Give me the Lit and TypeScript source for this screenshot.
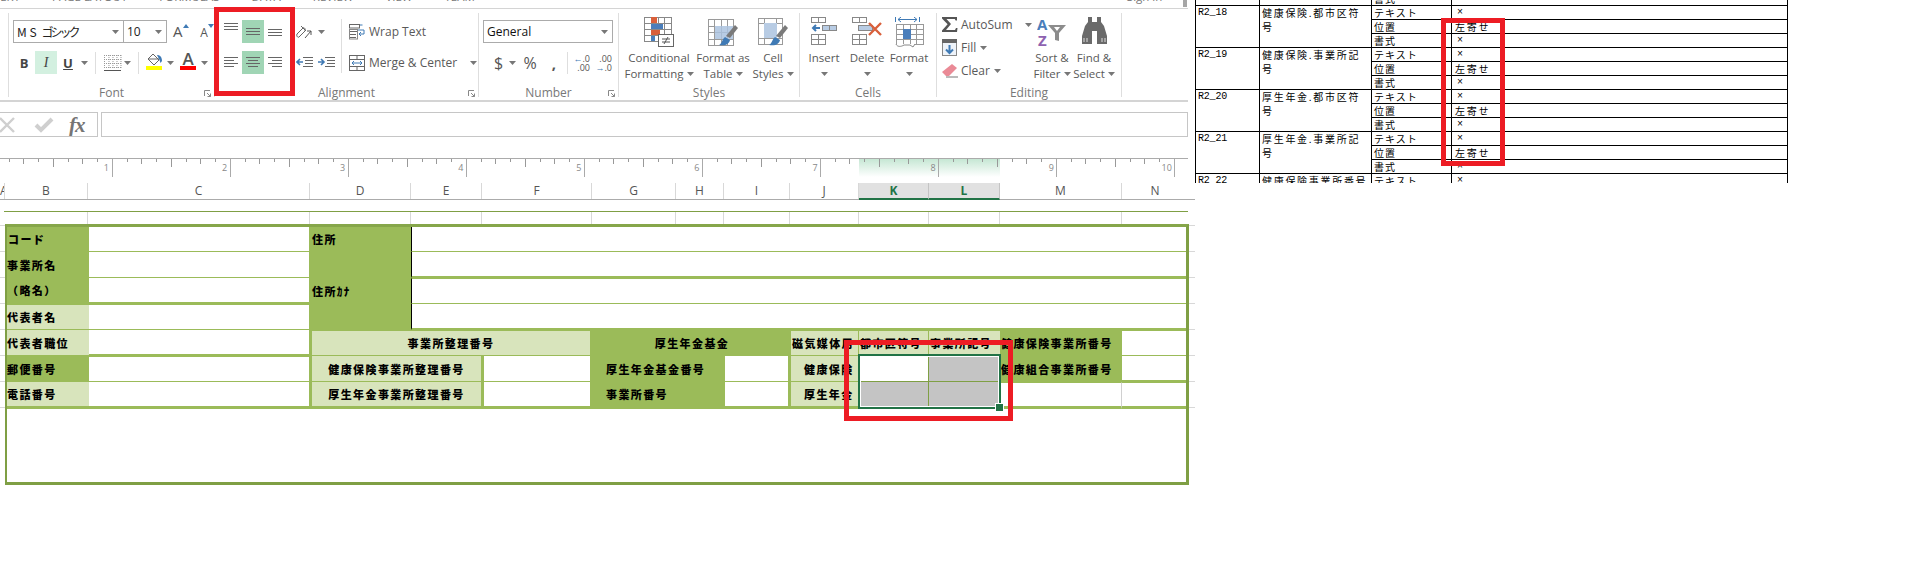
import { LitElement, html, svg, css } from "lit";
import { customElement } from "lit/decorators.js";

const caret = html`<svg class="caret" width="7" height="4" viewBox="0 0 7 4"><path d="M0 0h7L3.5 4z" fill="#777"/></svg>`;
const launcher = html`<svg class="launch" width="7" height="7" viewBox="0 0 7 7"><path d="M.5 6V.5H6M3 3l3.5 3.5M6.5 3.5v3h-3" fill="none" stroke="#888"/></svg>`;

const lines = (rows: number[][]) => html`<svg width="16" height="14" viewBox="0 0 16 14">${rows.map(
  ([x, y, w]) => svg`<rect x=${x} y=${y} width=${w} height="1" fill="#666"/>`)}</svg>`;

const indent = (right: boolean) => html`<svg width="17" height="11" viewBox="0 0 17 11">
  <path d="M7 .5h10M9 3.500h8M9 6.500h8M7 9.500h10" stroke="#666" fill="none"/>
  ${right ? svg`<path d="M0 5h5M3 2l3 3-3 3" stroke="#3f7ab5" stroke-width="1.6" fill="none"/>`
          : svg`<path d="M7 5H2M4 2L1 5l3 3" stroke="#3f7ab5" stroke-width="1.6" fill="none"/>`}
</svg>`;

const gridLines = (x: number, y: number, w: number, h: number, cols: number, rows: number, c = "#888") => {
  const out = [svg`<rect x=${x + .5} y=${y + .5} width=${w} height=${h} fill="#fff" stroke=${c}/>`];
  for (let i = 1; i < cols; i++) out.push(svg`<path d="M${Math.round(x + (w * i) / cols) + .5} ${y}v${h}" stroke=${c}/>`);
  for (let i = 1; i < rows; i++) out.push(svg`<path d="M${x} ${Math.round(y + (h * i) / rows) + .5}h${w}" stroke=${c}/>`);
  return out;
};

const iconCF = html`<svg width="31" height="30" viewBox="0 0 31 30">
  ${gridLines(0, 0, 27, 24, 4, 4)}
  <rect x="7" y="0" width="6" height="6" fill="#d9603b"/><rect x="7" y="7" width="12" height="5" fill="#4a7ebb"/>
  <rect x="7" y="13" width="9" height="5" fill="#d9603b"/><rect x="7" y="19" width="4" height="5" fill="#4a7ebb"/>
  <rect x="14.5" y="17.5" width="15" height="12" fill="#fff" stroke="#666"/>
  <path d="M18 22h8M18 25h8M24 20l-4 7" stroke="#555" fill="none"/>
</svg>`;
const brush = svg`<path d="M27 8l3 3-8 10-4-2z" fill="#7a7a7a"/><path d="M17 20l5 3c-1 4-4 6-11 5 3-1 3-6 6-8z" fill="#3f7ab5"/>`;
const iconTable = html`<svg width="31" height="30" viewBox="0 0 31 30">
  ${gridLines(0, 2, 25, 26, 4, 4, "#9a9a9a")}
  <rect x="7" y="9" width="18" height="13" fill="#b8cce4"/>
  <path d="M13.500 9v13M19.500 9v13M7 15.500h18" stroke="#a8bcd4"/>${brush}
</svg>`;
const iconCell = html`<svg width="31" height="30" viewBox="0 0 31 30">
  ${gridLines(0, 1, 24, 26, 1, 1, "#9a9a9a")}
  <path d="M0 6.500h24M6.500 1v26M0 21.500h24M18.500 1v26" stroke="#9a9a9a"/>
  <rect x="6" y="6" width="13" height="15" fill="#b8cce4"/>${brush}
</svg>`;
const iconInsert = html`<svg width="27" height="29" viewBox="0 0 27 29">
  ${gridLines(0, 0, 14, 5, 2, 1)}
  <path d="M9 11H3M5 8l-3 3 3 3" stroke="#3f7ab5" stroke-width="2" fill="none"/>
  <rect x="11.500" y="8.500" width="14" height="5" fill="#b8cce4" stroke="#888"/><path d="M18.500 8v6" stroke="#888"/>
  ${gridLines(0, 17, 14, 10, 2, 2)}
</svg>`;
const iconDelete = html`<svg width="31" height="29" viewBox="0 0 31 29">
  ${gridLines(0, 0, 14, 5, 2, 1)}
  <rect x="6.500" y="8.500" width="14" height="5" fill="#b8cce4" stroke="#888"/>
  ${gridLines(0, 17, 14, 10, 2, 2)}
  <path d="M17 6l12 12M29 6L17 18" stroke="#d9603b" stroke-width="2.400" fill="none"/>
</svg>`;
const iconFormat = html`<svg width="29" height="31" viewBox="0 0 29 31">
  <path d="M.5 0v5M24.500 0v5M3 2.500h19M6 0L3 2.500 6 5M19 0l3 2.500L19 5" stroke="#3f7ab5" fill="none"/>
  ${gridLines(1, 7, 27, 20, 4, 4, "#999")}
  <rect x="8" y="12" width="8" height="10" fill="#4a7ebb"/>
  <path d="M1 27c1 3 5 3 8 1h6l3 2 2-3" stroke="#888" fill="#fff"/>
</svg>`;

const sigma = html`<svg width="17" height="15" viewBox="0 0 17 15"><path d="M0 0h15v3.500h-1.400l-.8-1.600H4.500L9 7l-5 6h9l1-2h1.500L15 15H0v-1.400L5.600 7.200 0 1.400z" fill="#555"/></svg>`;
const fill = html`<svg width="15" height="17" viewBox="0 0 15 17"><rect x=".5" y=".5" width="14" height="16" fill="#eef3f9" stroke="#888"/><rect x="0" y="0" width="15" height="4" fill="#666"/><path d="M7.500 6v8M4 10.500l3.500 3.500 3.500-3.500" stroke="#3f7ab5" stroke-width="2" fill="none"/></svg>`;
const eraser = html`<svg width="16" height="14" viewBox="0 0 16 14"><path d="M10 0l5 4-8 8H4L0 8z" fill="#ea8a96"/><path d="M4 13h12" stroke="#777"/></svg>`;
const sortIcon = html`<svg width="31" height="29" viewBox="0 0 31 29">
  <text x="0" y="13" class="sa">A</text><text x="1" y="29" class="sz">Z</text>
  <path d="M11 8h18l-7 8v8l-4-1v-7z" fill="#8c8c8c"/><path d="M17 10h6l-3 4z" fill="#fff"/>
</svg>`;
const binoc = html`<svg width="27" height="28" viewBox="0 0 27 28">
  <path d="M7 0h4v5h5V0h4v5l3 4 3 10v8h-10V14h-5v13H1v-8L4 9l3-4z" fill="#6a6a6a"/>
  <path d="M3 21v4M6 21v4M21 21v4M24 21v4" stroke="#ddd"/>
</svg>`;

const wrapIcon = html`<svg width="16" height="16" viewBox="0 0 16 16">
  <rect x=".5" y=".5" width="10" height="3.500" fill="#fff" stroke="#666"/><path d="M1 7.500h7M1 10.500h6M1 13.500h6" stroke="#666"/>
  <rect x=".5" y="5.500" width="8" height="9.500" fill="none" stroke="#888"/>
  <path d="M11 1h2.500M9 6h6v4h-5M12 8l-2 2 2 2" stroke="#3f7ab5" fill="none"/>
</svg>`;
const mergeIcon = html`<svg width="16" height="16" viewBox="0 0 16 16">
  <rect x=".5" y=".5" width="15" height="15" fill="#fff" stroke="#666"/><path d="M0 4.500h16M0 11.500h16M8 0v4M8 12v4" stroke="#666"/>
  <path d="M3 8h10M5 6L3 8l2 2M11 6l2 2-2 2" stroke="#3f7ab5" fill="none"/>
</svg>`;
const orient = html`<svg width="17" height="14" viewBox="0 0 17 14">
  <path d="M1 9l6-6M3 12l6-6M1 9c-1 2 1 4 2 3M7 3c1-1 3 1 2 3M5 1l5 5" stroke="#666" fill="none"/>
  <path d="M9 13L15 6M15 6v4M15 6h-4" stroke="#555" fill="none"/>
</svg>`;
const borderIcon = html`<svg width="19" height="16" viewBox="0 0 19 16"><path d="M1 .5h17M1 4.500h17M1 8.500h17M1 12.500h17M1.500 0v13M6 0v13M10 0v13M14 0v13M18 0v13" stroke="#999" stroke-dasharray="1 1" fill="none"/><path d="M1 15.500h17" stroke="#555"/></svg>`;
const bucket = html`<svg width="17" height="13" viewBox="0 0 17 13"><path d="M7 1l6 6-5 5-6-6z" fill="#fff" stroke="#666"/><path d="M2 6h11" stroke="#666"/><path d="M11 2c3 0 5 2 5 6l-1.500 2-1-3z" fill="#3f7ab5"/></svg>`;
const xIcon = html`<svg width="16" height="16" viewBox="0 0 16 16"><path d="M1 1l14 14M15 1L1 15" stroke="#cfcfcf" stroke-width="2.400"/></svg>`;
const checkIcon = html`<svg width="20" height="16" viewBox="0 0 20 16"><path d="M2 8l5 5L18 2" stroke="#cfcfcf" stroke-width="4" fill="none"/></svg>`;

const rulerTicks = () => {
  const out = [];
  const step = 118 / 8;
  for (let i = 0; i * step + 8.5 < 1188; i++) {
    const x = Math.round(8.5 + i * step) + 0.5;
    const k = (i + 1) % 8;
    const h = k === 0 ? 18 : k === 4 ? 8 : k % 2 === 0 ? 5 : 3;
    out.push(svg`<path d="M${x} 0v${h}" stroke=${k === 0 ? "#aaa" : "#999"}/>`);
  }
  for (let n = 1; n <= 10; n++) {
    out.push(svg`<text x=${111 + (n - 1) * 118.1 - 2} y="12" text-anchor="end" class="rn">${n}</text>`);
  }
  return out;
};

const headers: [string, string, string?][] = [
  ["A", "w5"], ["B", "w83"], ["C", "w222"], ["D", "w101"], ["E", "w71"], ["F", "w110"], ["G", "w84"],
  ["H", "w48"], ["I", "w66"], ["J", "w69"], ["K", "w70", "sel"], ["L", "w71", "sel"], ["M", "w122"], ["N", "w66"],
];

const docRows: [string, string, string][] = [
  ["R2_18", "健康保険.都市区符", "号"],
  ["R2_19", "健康保険.事業所記", "号"],
  ["R2_20", "厚生年金.都市区符", "号"],
  ["R2_21", "厚生年金.事業所記", "号"],
];

@customElement("app-root")
export class AppRoot extends LitElement {
  static styles = css`
    :host { display: block; position: relative; width: 1914px; height: 568px; overflow: hidden; background: #fff; font-family: "Open Sans", "Noto Sans", sans-serif; color: #555; }
    .page { display: flex; align-items: flex-start; }
    .excel { width: 1195px; flex: none; }
    .chrome { width: 1188px; }
    svg { display: block; flex: none; }

    .tabs { height: 8px; overflow: hidden; }
    .tabs-in { display: flex; gap: 32px; margin-top: -12px; margin-left: -18px; font-size: 11.5px; line-height: 17px; color: #777; white-space: nowrap; }
    .signin { margin-left: 620px; }
    .scroll { position: absolute; left: 1183px; top: 0; width: 4px; height: 7px; background: #a6a6a6; }

    .ribbon { height: 91px; border-top: 1px solid #d4d4d4; border-bottom: 2px solid #d4d4d4; display: flex; padding-left: 8px; font-size: 11.5px; color: #595959; box-sizing: content-box; }
    .group { position: relative; margin-top: 4px; height: 84px; border-left: 1px solid #dedede; box-sizing: border-box; display: flex; flex: none; }
    .g-font { width: 206px; }
    .g-align { width: 264px; padding-left: 8px; }
    .g-num { width: 140px; }
    .g-styles { width: 181px; padding-left: 8px; border-left: 1px solid #dedede; }
    .g-cells { width: 137px; padding-left: 2px; }
    .g-edit { width: 186px; border-right: 1px solid #dedede; }
    .glabel { position: absolute; left: 0; right: 0; bottom: -3px; height: 14px; line-height: 14px; text-align: center; font-size: 12px; color: #777; }
    .launch { position: absolute; right: 3px; bottom: 0; }

    .rows { display: grid; grid-template-rows: 23px 23px; row-gap: 8px; padding-top: 7px; }
    .row { display: flex; align-items: center; }
    .p4 { padding-left: 4px; }
    .pn { padding-left: 9px; }
    .combo { height: 23px; box-sizing: border-box; border: 1px solid #ababab; display: flex; align-items: center; justify-content: space-between; padding: 0 4px 0 3px; background: #fff; }
    .cfont { width: 111px; font-family: "Noto Sans CJK JP", sans-serif; font-size: 12px; color: #222; }
    .cfont span { letter-spacing: -3px; margin-left: 5px; }
    .csize { width: 44px; margin-left: -1px; font-size: 12px; color: #222; }
    .cnum { width: 130px; font-size: 12px; color: #111; }
    .grow { margin-left: 6px; width: 22px; display: flex; align-items: flex-start; color: #555; line-height: 1; }
    .grow b { font-weight: 400; font-size: 15px; }
    .shrink { margin-left: 1px; width: 22px; display: flex; align-items: flex-start; justify-content: center; color: #555; line-height: 1; }
    .shrink b { font-weight: 400; font-size: 12px; margin-top: 3px; }
    .tb { width: 22px; height: 23px; display: flex; align-items: center; justify-content: center; font-size: 13px; color: #444; }
    .tb.bold { font-weight: 700; }
    .tb.it { font-style: italic; background: #d3f0e0; font-family: "Liberation Serif", serif; font-size: 14px; }
    .tb.ul { text-decoration: underline; font-weight: 700; }
    .c11 { width: 11px; display: flex; justify-content: center; }
    .c10 { width: 10px; display: flex; justify-content: center; }
    .c16 { width: 16px; display: flex; justify-content: center; }
    .sep { width: 1px; height: 22px; background: #dedede; flex: none; }
    .m57 { margin: 0 7px 0 5px; }
    .m67 { margin: 0 7px 0 6px; }
    .m06 { margin-right: 6px; }
    .colored { width: 16px; height: 23px; display: flex; flex-direction: column; align-items: center; }
    .colored .ico { height: 15px; display: flex; align-items: flex-end; font-size: 17px; font-weight: 600; line-height: 15px; color: #555; }
    .bar { width: 16px; height: 4px; }
    .yel { background: #ffff00; }
    .red { background: #ff0000; }
    .ml2 { margin-left: 2px; }

    .al-grid { display: grid; grid-template-columns: 16px 22px 16px; column-gap: 3px; grid-template-rows: 23px 23px; row-gap: 8px; padding-top: 7px; }
    .al { display: flex; justify-content: center; height: 23px; padding-top: 3px; box-sizing: border-box; }
    .al.on { background: #a0d5b5; }
    .orient { margin-left: 13px; width: 45px; }
    .orient .row { gap: 5px; }
    .v { margin-right: 7px; height: 54px; margin-top: 6px; }
    .wrap { width: 127px; }
    .wrap .row { gap: 4px; color: #595959; font-size: 12px; white-space: nowrap; }
    .merge-caret { margin-left: 9px; }

    .sym { font-size: 16px; color: #555; width: 21px; text-align: center; }
    .pct { font-size: 16px; width: 22px; margin-left: 3px; text-align: center; color: #555; }
    .cm { font-size: 15px; font-weight: 700; width: 26px; text-align: center; color: #555; }
    .dec { font-size: 9px; line-height: 9px; color: #555; width: 16px; margin-right: 6px; display: flex; flex-direction: column; align-items: flex-end; white-space: nowrap; }
    .dec i { font-style: normal; color: #3f7ab5; }

    .bigs { display: grid; }
    .b3s { grid-template-columns: 64px 64px 36px; }
    .b3c { grid-template-columns: 44px 42px 42px; }
    .b2e { grid-template-columns: 42px 42px; }
    .big { display: flex; flex-direction: column; align-items: center; white-space: nowrap; line-height: 16px; }
    .big .ic { height: 37px; box-sizing: border-box; padding-top: 4px; }
    .big .tl { height: 16px; display: flex; align-items: center; gap: 3px; }
    .sa { font: 700 15px "Open Sans", sans-serif; fill: #4a7ebb; }
    .sz { font: 700 15px "Open Sans", sans-serif; fill: #8e62b0; }
    .editcol { width: 94px; display: grid; grid-template-rows: 23px 23px 23px; }
    .ed { display: flex; align-items: center; padding-left: 5px; font-size: 12px; }
    .ed .i { width: 19px; display: flex; }
    .ed .sumc { margin-left: 12px; }
    .ed .cr { margin-left: 4px; }

    .fbar { height: 25px; margin-top: 10px; display: flex; gap: 3px; }
    .names { width: 98px; box-sizing: border-box; border: 1px solid #c6c6c6; border-left: 0; display: flex; align-items: center; overflow: hidden; }
    .names .x { margin-left: -1px; width: 35px; }
    .names .ck { width: 35px; }
    .fx { font-family: "Liberation Serif", serif; font-style: italic; font-weight: 700; font-size: 21px; color: #757575; line-height: 24px; letter-spacing: -1px; }
    .input { flex: 1; border: 1px solid #c6c6c6; box-sizing: border-box; }

    .ruler { position: relative; height: 24px; margin-top: 21px; border-top: 1px solid #ababab; }
    .ruler-sel { position: absolute; left: 859px; top: 0; width: 141px; height: 18px; background: linear-gradient(#c6e7d4, #fff); }
    .ruler svg { position: relative; }
    .rn { font: 9px "Open Sans", sans-serif; fill: #888; }

    .cols { display: flex; height: 16px; width: 1195px; border-bottom: 1px solid #ababab; font-size: 12px; color: #555; }
    .ch { box-sizing: border-box; border-right: 1px solid #d8d8d8; text-align: center; line-height: 16px; flex: none; overflow: hidden; }
    .ch.sel { background: #e1e1e1; color: #217346; font-weight: 700; border-bottom: 2px solid #217346; border-right-color: #c4c4c4; height: 17px; }
    .ch:last-child { border-right: 0; }
    .w5 { width: 5px; } .w83 { width: 83px; } .w222 { width: 222px; } .w101 { width: 101px; } .w71 { width: 71px; }
    .w110 { width: 110px; } .w84 { width: 84px; } .w48 { width: 48px; } .w66 { width: 66px; } .w69 { width: 69px; }
    .w70 { width: 70px; } .w122 { width: 122px; }

    .sheet { margin-top: 11px; width: 1195px; background: repeating-linear-gradient(#d8d8d8 0 1px, transparent 1px 26px) 0 14px / 100% 183px no-repeat; }
    .topline { margin-left: 4px; width: 1184px; height: 12px; border-top: 1px solid #7f9f44; display: flex; box-sizing: content-box; }
    .topline div { box-sizing: border-box; border-right: 1px solid #d8d8d8; flex: none; }
    .topline div:first-child { width: 84px; }
    .tbl { position: relative; margin-left: 5px; width: 1184px; box-sizing: border-box; border: solid #7f9f44; border-width: 3px 3px 3px 2px; display: grid;
      grid-template-columns: 82px 223px 99px 73px 109px 83px 49px 66px 68px 70px 71px 122px 1fr;
      grid-template-rows: 25px 26px 26px 26px 26px 26px 27px 73px;
      font-family: "Noto Sans CJK JP", sans-serif; font-weight: 900; font-size: 11px; letter-spacing: 1.4px; color: #000; background: #fff; }
    .tbl { border-top-color: #86a64a; }
    .c { box-sizing: border-box; border: 0 solid #9bbb59; border-bottom-width: 1px; display: flex; align-items: center; white-space: nowrap; background: #fff; min-width: 0; }
    .d { background: #9bbb59; }
    .l { background: #d8e4bc; }
    .g { background: #c4c4c4; }
    .bb2 { border-bottom-width: 2px; }
    .bb3 { border-bottom-width: 3px; }
    .bt1 { border-top-width: 1px; }
    .br3 { border-right-width: 3px; }
    .br1 { border-right-width: 1px; }
    .blk { border-left: 1px solid #000; }
    .ol { border-color: #7f9f44; }
    .gr { border-right: 1px solid #d0d0d0; }
    .s2 { grid-column: span 2; } .s3 { grid-column: span 3; } .s10 { grid-column: span 10; } .s13 { grid-column: span 13; }
    .ctr { justify-content: center; }
    .ind { padding-left: 13px; }
    .p1 { padding-left: 1px; }
    .nb { border-bottom: 0; }
    .selection { position: absolute; left: 851px; top: 127px; width: 143px; height: 55px; box-sizing: border-box; border: 2px solid #217346; box-shadow: inset 0 0 0 1px #fff; }
    .handle { position: absolute; right: -5px; bottom: -5px; width: 7px; height: 7px; background: #217346; border: 1px solid #fff; }

    .doc { width: 719px; height: 183px; overflow: hidden; flex: none; }
    table { margin-top: -9px; border-collapse: collapse; width: 593px; table-layout: fixed; font-family: "Noto Sans CJK JP", sans-serif; font-size: 10px; color: #000; }
    td { border: 1px solid #000; height: 14px; padding: 0 0 0 2px; line-height: 13px; box-sizing: border-box; vertical-align: top; overflow: hidden; white-space: nowrap; letter-spacing: 1px; }
    .nm { line-height: 14px; }
    .id { font-family: "Liberation Mono", monospace; letter-spacing: -.2px; }
    .nm { letter-spacing: 1.7px; }
    .mk { padding-left: 5px; font-family: "Liberation Mono", monospace; letter-spacing: 0; }
    .pos { padding-left: 3px; letter-spacing: 1.7px; }
    .c1 { width: 64px; } .c2 { width: 112px; } .c3 { width: 80px; }

    .mark { position: absolute; box-sizing: border-box; border: 5px solid #ed1c24; }
    .m1 { left: 214px; top: 7px; width: 81px; height: 89px; }
    .m2 { left: 844px; top: 340px; width: 169px; height: 81px; }
    .m3 { left: 1441px; top: 18px; width: 64px; height: 148px; }
  `;

  render() {
    const kv = html`<td>テキスト</td><td class="mk">×</td>`;
    return html`
      <div class="page">
        <div class="excel">
          <div class="chrome">
            <div class="tabs"><div class="tabs-in"><span>INSERT</span><span>PAGE LAYOUT</span><span>FORMULAS</span><span>DATA</span><span>REVIEW</span><span>VIEW</span><span>TEAM</span><span class="signin">Sign in</span></div></div>
            <div class="ribbon">
              <div class="group g-font">
                <div class="rows">
                  <div class="row p4">
                    <div class="combo cfont"><div>M S<span>ゴシック</span></div>${caret}</div>
                    <div class="combo csize"><div>10</div>${caret}</div>
                    <div class="grow"><b>A</b><svg width="6" height="4" viewBox="0 0 6 4"><path d="M0 4h6L3 0z" fill="#3f7ab5"/></svg></div>
                    <div class="shrink"><b>A</b><svg width="6" height="4" viewBox="0 0 6 4"><path d="M0 0h6L3 4z" fill="#3f7ab5"/></svg></div>
                  </div>
                  <div class="row p4">
                    <div class="tb bold">B</div><div class="tb it">I</div><div class="tb ul">U</div><div class="c11">${caret}</div>
                    <div class="sep m57"></div>${borderIcon}<div class="c10">${caret}</div>
                    <div class="sep m67"></div>
                    <div class="colored"><div class="ico">${bucket}</div><div class="bar yel"></div></div><div class="c16">${caret}</div>
                    <div class="colored ml2"><div class="ico">A</div><div class="bar red"></div></div><div class="c16">${caret}</div>
                  </div>
                </div>
                <div class="glabel">Font</div>${launcher}
              </div>

              <div class="group g-align">
                <div class="al-grid">
                  <div class="al">${lines([[1, 0, 14], [1, 3, 14], [1, 6, 14]])}</div>
                  <div class="al on">${lines([[1, 5, 14], [1, 8, 14], [1, 11, 14]])}</div>
                  <div class="al">${lines([[1, 9, 14], [1, 12, 14], [1, 6, 14]])}</div>
                  <div class="al">${lines([[1, 3, 14], [1, 6, 10], [1, 9, 14], [1, 12, 10]])}</div>
                  <div class="al on">${lines([[1, 3, 14], [3, 6, 10], [1, 9, 14], [3, 12, 10]])}</div>
                  <div class="al">${lines([[1, 3, 14], [5, 6, 10], [1, 9, 14], [5, 12, 10]])}</div>
                </div>
                <div class="rows orient">
                  <div class="row">${orient}${caret}</div>
                  <div class="row">${indent(false)}${indent(true)}</div>
                </div>
                <div class="sep v"></div>
                <div class="rows wrap">
                  <div class="row">${wrapIcon}<span>Wrap Text</span></div>
                  <div class="row">${mergeIcon}<span>Merge &amp; Center</span><span class="merge-caret">${caret}</span></div>
                </div>
                <div class="glabel">Alignment</div>${launcher}
              </div>

              <div class="group g-num">
                <div class="rows">
                  <div class="row p4"><div class="combo cnum"><div>General</div>${caret}</div></div>
                  <div class="row pn">
                    <div class="sym">$</div>${caret}<div class="pct">%</div><div class="cm">,</div>
                    <div class="sep m06"></div>
                    <div class="dec"><span><i>←</i>.0</span><span>.00</span></div>
                    <div class="dec"><span>.00</span><span><i>→</i>.0</span></div>
                  </div>
                </div>
                <div class="glabel">Number</div>${launcher}
              </div>

              <div class="group g-styles">
                <div class="bigs b3s">
                  <div class="big"><div class="ic">${iconCF}</div><div class="tl">Conditional</div><div class="tl">Formatting ${caret}</div></div>
                  <div class="big"><div class="ic">${iconTable}</div><div class="tl">Format as</div><div class="tl">Table ${caret}</div></div>
                  <div class="big"><div class="ic">${iconCell}</div><div class="tl">Cell</div><div class="tl">Styles ${caret}</div></div>
                </div>
                <div class="glabel">Styles</div>
              </div>

              <div class="group g-cells">
                <div class="bigs b3c">
                  <div class="big"><div class="ic">${iconInsert}</div><div class="tl">Insert</div><div class="tl">${caret}</div></div>
                  <div class="big"><div class="ic">${iconDelete}</div><div class="tl">Delete</div><div class="tl">${caret}</div></div>
                  <div class="big"><div class="ic">${iconFormat}</div><div class="tl">Format</div><div class="tl">${caret}</div></div>
                </div>
                <div class="glabel">Cells</div>
              </div>

              <div class="group g-edit">
                <div class="editcol">
                  <div class="ed"><div class="i">${sigma}</div>AutoSum<span class="sumc">${caret}</span></div>
                  <div class="ed"><div class="i">${fill}</div>Fill<span class="cr">${caret}</span></div>
                  <div class="ed"><div class="i">${eraser}</div>Clear<span class="cr">${caret}</span></div>
                </div>
                <div class="bigs b2e">
                  <div class="big"><div class="ic">${sortIcon}</div><div class="tl">Sort &amp;</div><div class="tl">Filter ${caret}</div></div>
                  <div class="big"><div class="ic">${binoc}</div><div class="tl">Find &amp;</div><div class="tl">Select ${caret}</div></div>
                </div>
                <div class="glabel">Editing</div>
              </div>
            </div>

            <div class="fbar">
              <div class="names"><div class="x">${xIcon}</div><div class="ck">${checkIcon}</div><div class="fx">fx</div></div>
              <div class="input"></div>
            </div>

            <div class="ruler">
              <div class="ruler-sel"></div>
              <svg width="1188" height="20" viewBox="0 0 1188 20">${rulerTicks()}</svg>
            </div>
          </div>

          <div class="cols">
            ${headers.map(([t, w, s]) => html`<div class="ch ${w} ${s ?? ""}">${t}</div>`)}
          </div>

          <div class="sheet">
            <div class="topline">
              <div></div><div class="w222"></div><div class="w101"></div><div class="w71"></div><div class="w110"></div><div class="w84"></div><div class="w48"></div><div class="w66"></div><div class="w69"></div><div class="w70"></div><div class="w71"></div><div class="w122"></div>
            </div>
            <div class="tbl">
              <div class="c d p1">コード</div><div class="c br3"></div><div class="c d">住所</div><div class="c s10 blk"></div>
              <div class="c d">事業所名</div><div class="c br3"></div><div class="c d"></div><div class="c s10 blk bb2"></div>
              <div class="c d bb2">（略名）</div><div class="c br3 bb2"></div><div class="c d">住所ｶﾅ</div><div class="c s10 blk bt1"></div>
              <div class="c l bt1">代表者名</div><div class="c br3 bt1"></div><div class="c d"></div><div class="c s10 blk bb2"></div>

              <div class="c l">代表者職位</div><div class="c br3 bb2"></div>
              <div class="c l s3 ctr bt1 br3">事業所整理番号</div>
              <div class="c d s3 ctr">厚生年金基金</div>
              <div class="c l bt1 br1 p1">磁気媒体用</div><div class="c l bt1 br1 p1">都市区符号</div><div class="c l bt1 p1">事業所記号</div>
              <div class="c d p1">健康保険事業所番号</div><div class="c bt1"></div>

              <div class="c d bt1">郵便番号</div><div class="c br3 bt1"></div>
              <div class="c l s2 ctr br3">健康保険事業所整理番号</div><div class="c br3"></div>
              <div class="c d s2 ind">厚生年金基金番号</div><div class="c br3"></div>
              <div class="c l ind">健康保険</div><div class="c br1 ol"></div><div class="c g ol"></div>
              <div class="c d p1">健康組合事業所番号</div><div class="c bb2"></div>

              <div class="c l bb3">電話番号</div><div class="c br3 bb3"></div>
              <div class="c l s2 ctr br3 bb3">厚生年金事業所整理番号</div><div class="c br3 bb3"></div>
              <div class="c d s2 ind bb3">事業所番号</div><div class="c br3 bb3"></div>
              <div class="c l ind bb3">厚生年金</div><div class="c g bb3 br1 ol"></div><div class="c g bb3"></div>
              <div class="c bt1 bb3 gr"></div><div class="c bt1 bb3"></div>

              <div class="c s13 nb"></div>
              <div class="selection"><div class="handle"></div></div>
            </div>
          </div>
        </div>

        <div class="doc">
          <table>
            <colgroup><col class="c1"/><col class="c2"/><col class="c3"/><col/></colgroup>
            <tbody>
              <tr><td></td><td></td><td>書式</td><td class="mk">×</td></tr>
              ${docRows.map(([id, a, b]) => html`
                <tr><td rowspan="3" class="id">${id}</td><td rowspan="3" class="nm">${a}<br/>${b}</td>${kv}</tr>
                <tr><td>位置</td><td class="pos">左寄せ</td></tr>
                <tr><td>書式</td><td class="mk">×</td></tr>`)}
              <tr><td class="id">R2_22</td><td class="nm">健康保険事業所番号</td>${kv}</tr>
            </tbody>
          </table>
        </div>
      </div>
      <div class="scroll"></div>
      <div class="mark m1"></div>
      <div class="mark m2"></div>
      <div class="mark m3"></div>
    `;
  }
}
